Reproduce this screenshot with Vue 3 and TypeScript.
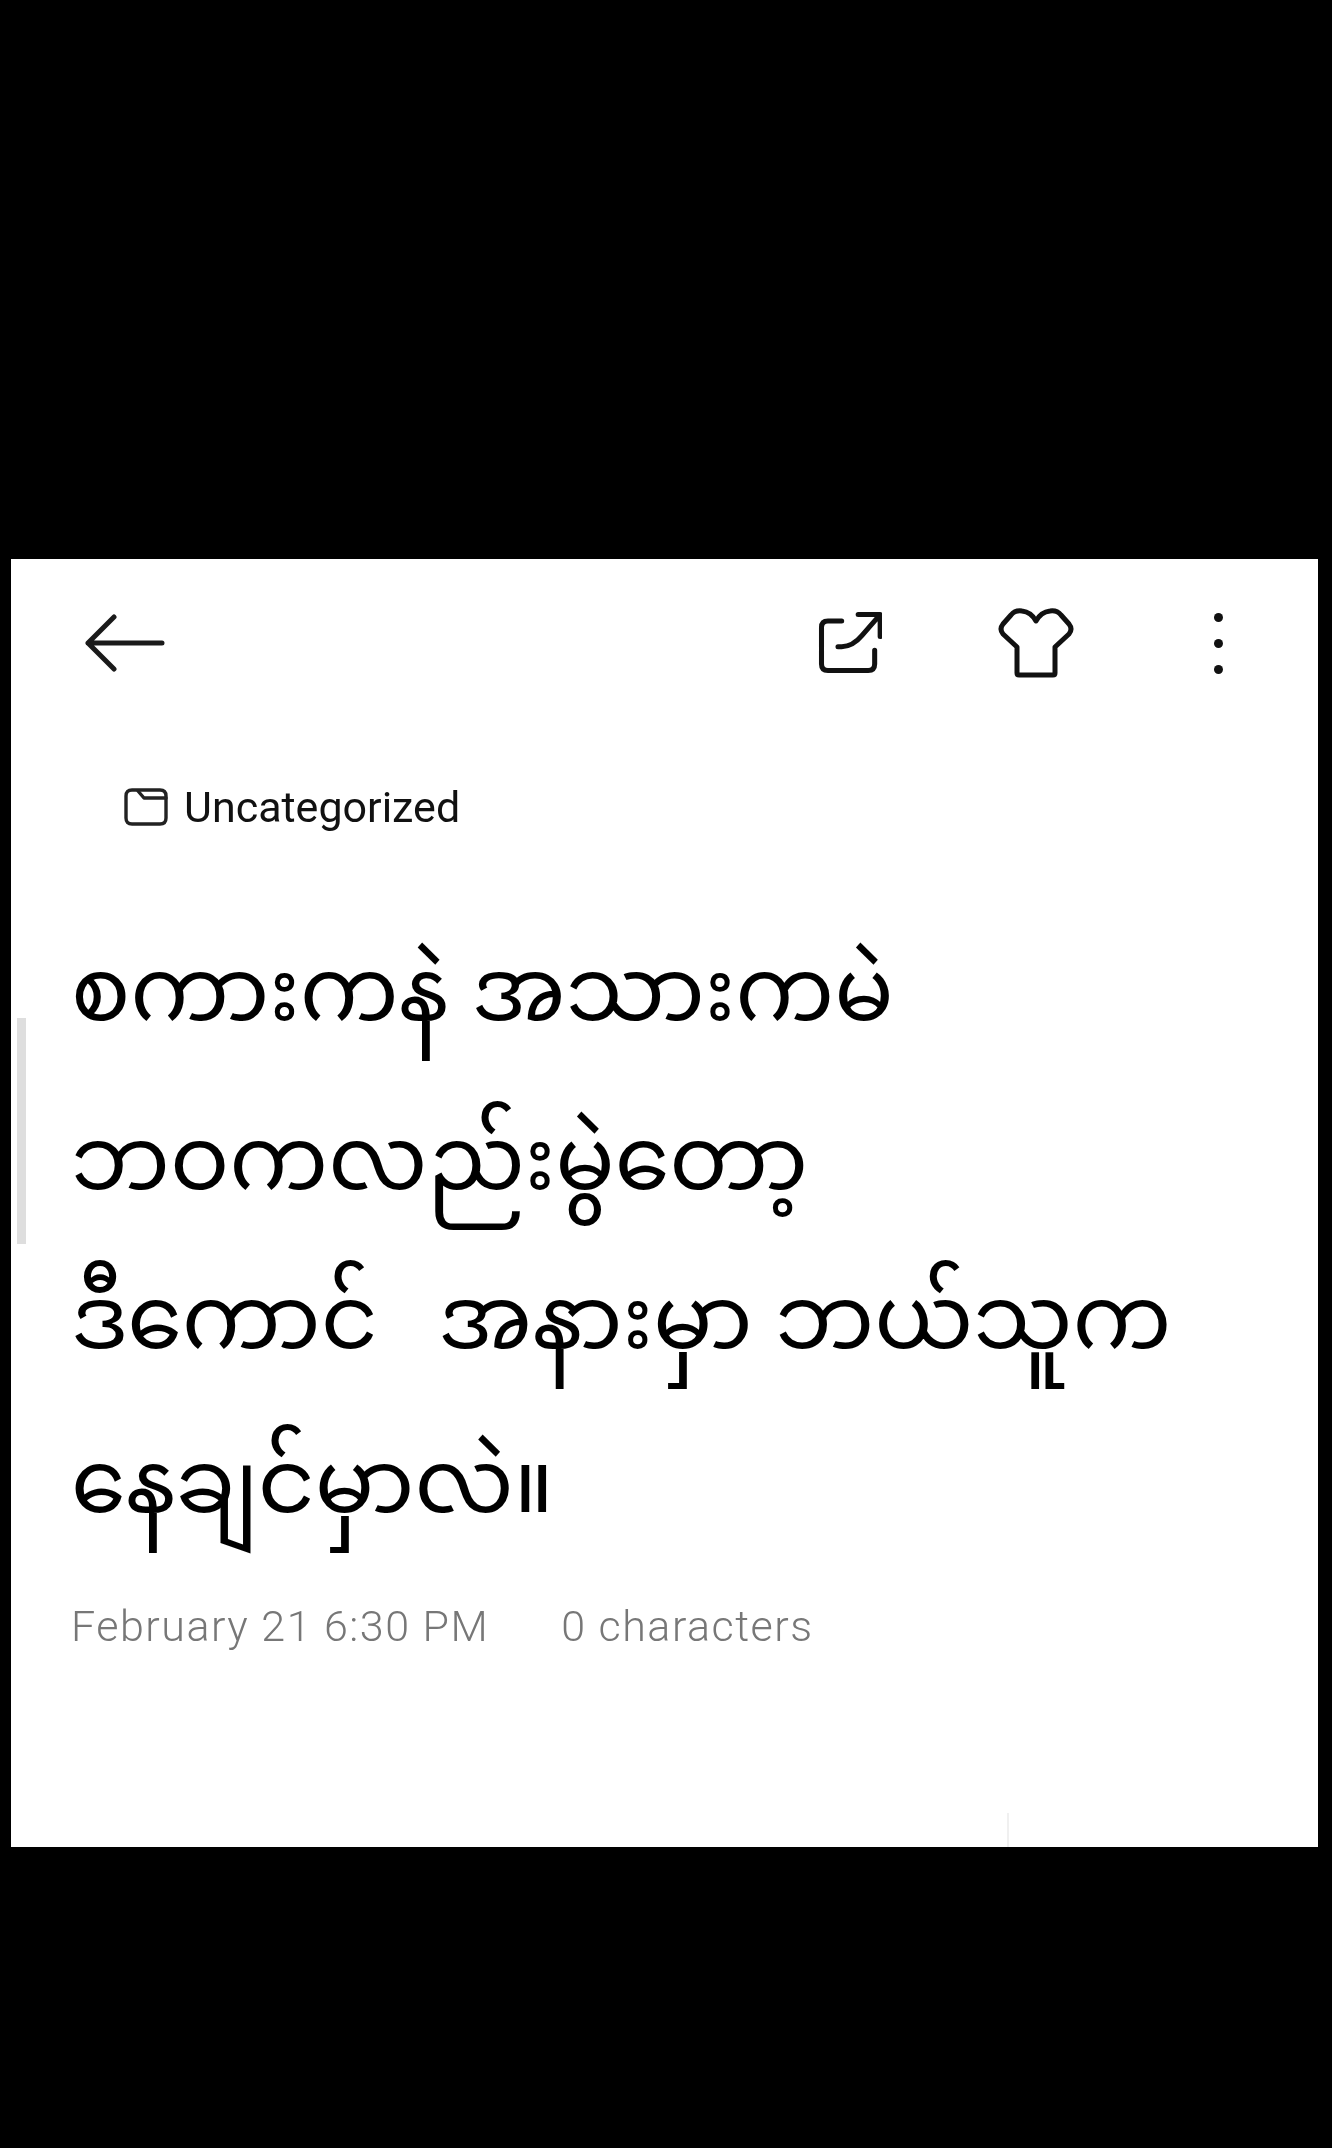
<script setup lang="ts">
const lines: string[] = [
  'စကားကနဲ အသားကမဲ',
  'ဘဝကလည်းမွဲတော့',
  'ဒီကောင်  \u2006အနားမှာ ဘယ်သူက',
  'နေချင်မှာလဲ။',
]
</script>

<template>
  <div class="screen">
    <div class="note">
      <div class="scrollbar"></div>
      <div class="tick"></div>
      <div class="toolbar">
        <svg class="back" width="82" height="60" viewBox="0 0 82 60" fill="none" stroke="#1a1a1a" stroke-width="5" stroke-linecap="round" stroke-linejoin="round">
          <path d="M3 30H77M29 4 3 30l26 26" />
        </svg>
        <div class="actions">
          <svg width="66" height="66" viewBox="0 0 72 72" fill="none" stroke="#111" stroke-width="5.5" stroke-linecap="round" stroke-linejoin="round">
            <path d="M28 12H13q-7 0-7 7v40q0 7 7 7h44q7 0 7-7V44" />
            <path d="M46 5h24v24M70 5 50 28q-10 12-22 12h-4" />
          </svg>
          <svg class="shirt" width="76" height="72" viewBox="0 0 76 72" fill="none" stroke="#111" stroke-width="5" stroke-linecap="round" stroke-linejoin="round">
            <path d="M38 14Q33 5 24 4 17 3 13 8L5 17q-4 5 0 10l14 13v26q0 2 2 2h34q2 0 2-2V40l14-13q4-5 0-10L63 8q-4-5-11-4-9 1-14 10Z" />
          </svg>
          <div class="dots">
            <span></span>
            <span></span>
            <span></span>
          </div>
        </div>
      </div>

      <div class="folder">
        <svg width="44" height="38" viewBox="0 0 44 38" fill="none" stroke="#222" stroke-width="3.4" stroke-linejoin="round" stroke-linecap="round">
          <path d="M8 2h28q6 0 6 6v22q0 6-6 6H8q-6 0-6-6V8q0-6 6-6Z" />
          <path d="M14 3l6 7h22" />
        </svg>
        <span>Uncategorized</span>
      </div>

      <div class="title">
        <p v-for="line in lines" :key="line">{{ line }}</p>
      </div>

      <div class="meta">
        <span>February 21 6:30 PM</span>
        <span>0 characters</span>
      </div>
    </div>
  </div>
</template>

<style>
html,
body {
  background: #000;
}
</style>

<style scoped>
.screen {
  width: 1332px;
  height: 2148px;
  background: #000;
  padding-top: 559px;
  box-sizing: border-box;
  overflow: hidden;
}
.note {
  position: relative;
  width: 1307px;
  height: 1288px;
  margin-left: 11px;
  background: #fff;
  box-sizing: border-box;
  padding: 54px 0 0 60px;
  font-family: Roboto, 'Noto Sans', sans-serif;
  color: #111;
  filter: blur(0.6px);
}
.scrollbar {
  position: absolute;
  left: 6px;
  top: 459px;
  width: 9px;
  height: 226px;
  background: #dedede;
}
.tick {
  position: absolute;
  left: 996px;
  bottom: 0;
  width: 2px;
  height: 34px;
  background: #f0f0f0;
}
.toolbar {
  display: flex;
  justify-content: space-between;
  align-items: center;
  height: 60px;
  padding-left: 14px;
  padding-right: 95px;
}
.actions {
  display: flex;
  align-items: center;
  gap: 116px;
}
.dots {
  display: flex;
  flex-direction: column;
  gap: 17px;
  margin-left: 24px;
}
.dots span {
  width: 9px;
  height: 9px;
  border-radius: 50%;
  background: #111;
}
.folder {
  display: flex;
  align-items: center;
  gap: 16px;
  margin-top: 111px;
  margin-left: 53px;
  font-size: 43px;
  line-height: 46px;
  color: #111;
}
.title {
  margin-top: 88px;
  font-family: 'Noto Sans Myanmar', 'Padauk', 'DejaVu Sans', 'Noto Sans', sans-serif;
  font-size: 88px;
  line-height: 164px;
  color: #000;
}
.title p {
  margin: 0;
  white-space: pre;
}
.title p:nth-child(1) {
  margin-bottom: 5px;
}
.title p:nth-child(2) {
  margin-bottom: -5px;
}
.meta {
  display: flex;
  gap: 72px;
  margin-top: 27px;
  font-size: 43px;
  font-weight: 300;
  line-height: 50px;
  letter-spacing: 1.5px;
  color: #777;
}
</style>
